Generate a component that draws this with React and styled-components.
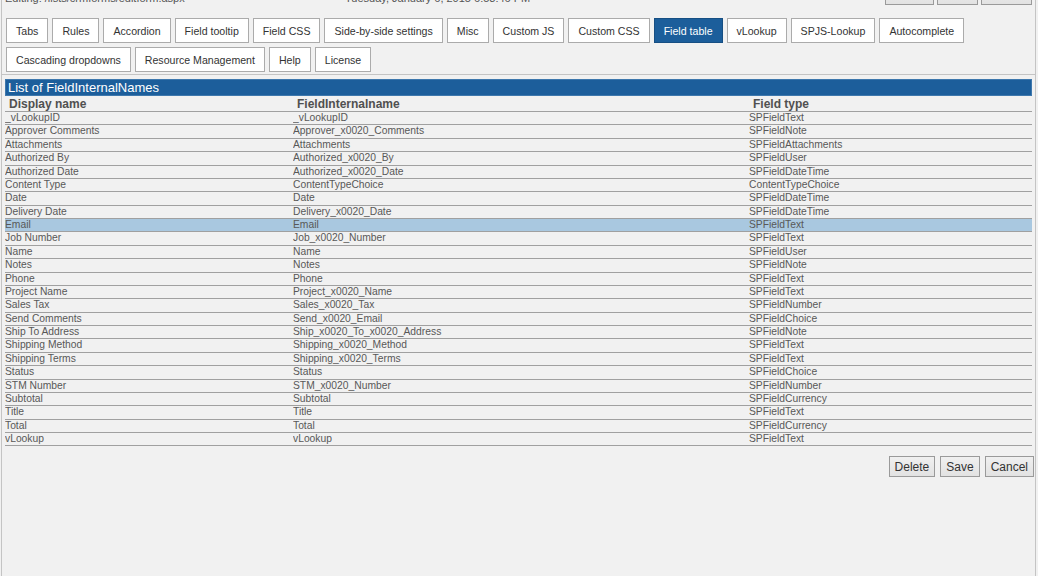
import React from "react";
import styled, { createGlobalStyle } from "styled-components";

const GlobalStyle = createGlobalStyle`
  html, body {
    margin: 0;
    padding: 0;
    background: #f1f1f1;
    font-family: "Liberation Sans", Arial, sans-serif;
  }
`;

const Frame = styled.div`
  height: 576px;
  margin: 0 2px 0 1px;
  border-left: 1px solid #c4c4c4;
  border-right: 1px solid #c4c4c4;
  overflow: hidden;
  box-sizing: border-box;
`;

const TopBar = styled.div`
  display: grid;
  grid-template-columns: 340px 1fr auto;
  align-items: end;
  height: 20px;
  margin-top: -16px;
  padding: 0 3px;
  font-size: 11px;
  line-height: 13px;
  color: #555;
`;

const TopText = styled.span`
  white-space: nowrap;
`;

const TopButtons = styled.div`
  display: flex;
  gap: 3px;
  margin-bottom: 0;
`;

const TabArea = styled.div`
  display: flex;
  flex-wrap: wrap;
  gap: 4px 4px;
  padding: 14px 4px 2px;
  border-bottom: 1px solid #c4c4c4;
`;

const TabButton = styled.button`
  height: 25px;
  padding: 0 9px;
  border: 1px solid ${(p) => (p.$active ? "#174f83" : "#ababab")};
  background: ${(p) => (p.$active ? "#1c5e9b" : "#ffffff")};
  color: ${(p) => (p.$active ? "#ffffff" : "#333333")};
  font-family: "Liberation Sans", Arial, sans-serif;
  font-size: 10.6px;
  cursor: pointer;
`;

const ListSection = styled.div`
  margin: 4px 3px 0;
`;

const TitleBar = styled.div`
  height: 17px;
  background: #1c5e9b;
  border: 1px solid #3e78ad;
  box-sizing: border-box;
  color: #ffffff;
  font-size: 13px;
  line-height: 15px;
  padding-left: 2px;
`;

const Table = styled.table`
  width: 100%;
  border-collapse: collapse;
  table-layout: fixed;
`;

const HeadCell = styled.th`
  text-align: left;
  padding: 1px 4px 0;
  height: 14px;
  font-size: 12px;
  line-height: 14px;
  font-weight: bold;
  color: #505050;
  border-bottom: 1px solid #a0a0a0;
`;

const Row = styled.tr`
  background: ${(p) => (p.$selected ? "#a9c8e0" : "transparent")};
`;

const Cell = styled.td`
  padding: 0;
  height: 12.375px;
  font-size: 10.3px;
  line-height: 12.375px;
  color: #585858;
  border-bottom: 1px solid #a0a0a0;
  white-space: nowrap;
  overflow: hidden;
`;

const Actions = styled.div`
  display: flex;
  justify-content: flex-end;
  gap: 5px;
  margin: 10px -2px 0 0;
`;

const ActionButton = styled.button`
  height: 21px;
  padding: 0 5px;
  border: 1px solid #9a9a9a;
  background: linear-gradient(#f0f0f0, #e2e2e2);
  color: #333;
  font-family: "Liberation Sans", Arial, sans-serif;
  font-size: 12px;
  cursor: pointer;
`;

const tabs = [
  "Tabs", "Rules", "Accordion", "Field tooltip", "Field CSS", "Side-by-side settings",
  "Misc", "Custom JS", "Custom CSS", "Field table", "vLookup", "SPJS-Lookup",
  "Autocomplete", "Cascading dropdowns", "Resource Management", "Help", "License",
];

const fields = [
  ["_vLookupID", "_vLookupID", "SPFieldText"],
  ["Approver Comments", "Approver_x0020_Comments", "SPFieldNote"],
  ["Attachments", "Attachments", "SPFieldAttachments"],
  ["Authorized By", "Authorized_x0020_By", "SPFieldUser"],
  ["Authorized Date", "Authorized_x0020_Date", "SPFieldDateTime"],
  ["Content Type", "ContentTypeChoice", "ContentTypeChoice"],
  ["Date", "Date", "SPFieldDateTime"],
  ["Delivery Date", "Delivery_x0020_Date", "SPFieldDateTime"],
  ["Email", "Email", "SPFieldText"],
  ["Job Number", "Job_x0020_Number", "SPFieldText"],
  ["Name", "Name", "SPFieldUser"],
  ["Notes", "Notes", "SPFieldNote"],
  ["Phone", "Phone", "SPFieldText"],
  ["Project Name", "Project_x0020_Name", "SPFieldText"],
  ["Sales Tax", "Sales_x0020_Tax", "SPFieldNumber"],
  ["Send Comments", "Send_x0020_Email", "SPFieldChoice"],
  ["Ship To Address", "Ship_x0020_To_x0020_Address", "SPFieldNote"],
  ["Shipping Method", "Shipping_x0020_Method", "SPFieldText"],
  ["Shipping Terms", "Shipping_x0020_Terms", "SPFieldText"],
  ["Status", "Status", "SPFieldChoice"],
  ["STM Number", "STM_x0020_Number", "SPFieldNumber"],
  ["Subtotal", "Subtotal", "SPFieldCurrency"],
  ["Title", "Title", "SPFieldText"],
  ["Total", "Total", "SPFieldCurrency"],
  ["vLookup", "vLookup", "SPFieldText"],
];

export default function App() {
  return (
    <>
      <GlobalStyle />
      <Frame>
        <TopBar>
          <TopText>Editing: /lists/crmforms/editform.aspx</TopText>
          <TopText>Tuesday, January 6, 2015 6:53:46 PM</TopText>
          <TopButtons>
            <ActionButton style={{ width: 49 }}>Delete</ActionButton>
            <ActionButton style={{ width: 41 }}>Save</ActionButton>
            <ActionButton style={{ width: 51 }}>Cancel</ActionButton>
          </TopButtons>
        </TopBar>
        <TabArea>
          {tabs.map((t) => (
            <TabButton key={t} $active={t === "Field table"}>{t}</TabButton>
          ))}
        </TabArea>
        <ListSection>
          <TitleBar>List of FieldInternalNames</TitleBar>
          <Table>
            <colgroup>
              <col style={{ width: 288 }} />
              <col style={{ width: 456 }} />
              <col />
            </colgroup>
            <thead>
              <tr>
                <HeadCell>Display name</HeadCell>
                <HeadCell>FieldInternalname</HeadCell>
                <HeadCell>Field type</HeadCell>
              </tr>
            </thead>
            <tbody>
              {fields.map(([display, internal, type]) => (
                <Row key={internal} $selected={display === "Email"}>
                  <Cell>{display}</Cell>
                  <Cell>{internal}</Cell>
                  <Cell>{type}</Cell>
                </Row>
              ))}
            </tbody>
          </Table>
          <Actions>
            <ActionButton>Delete</ActionButton>
            <ActionButton>Save</ActionButton>
            <ActionButton>Cancel</ActionButton>
          </Actions>
        </ListSection>
      </Frame>
    </>
  );
}
